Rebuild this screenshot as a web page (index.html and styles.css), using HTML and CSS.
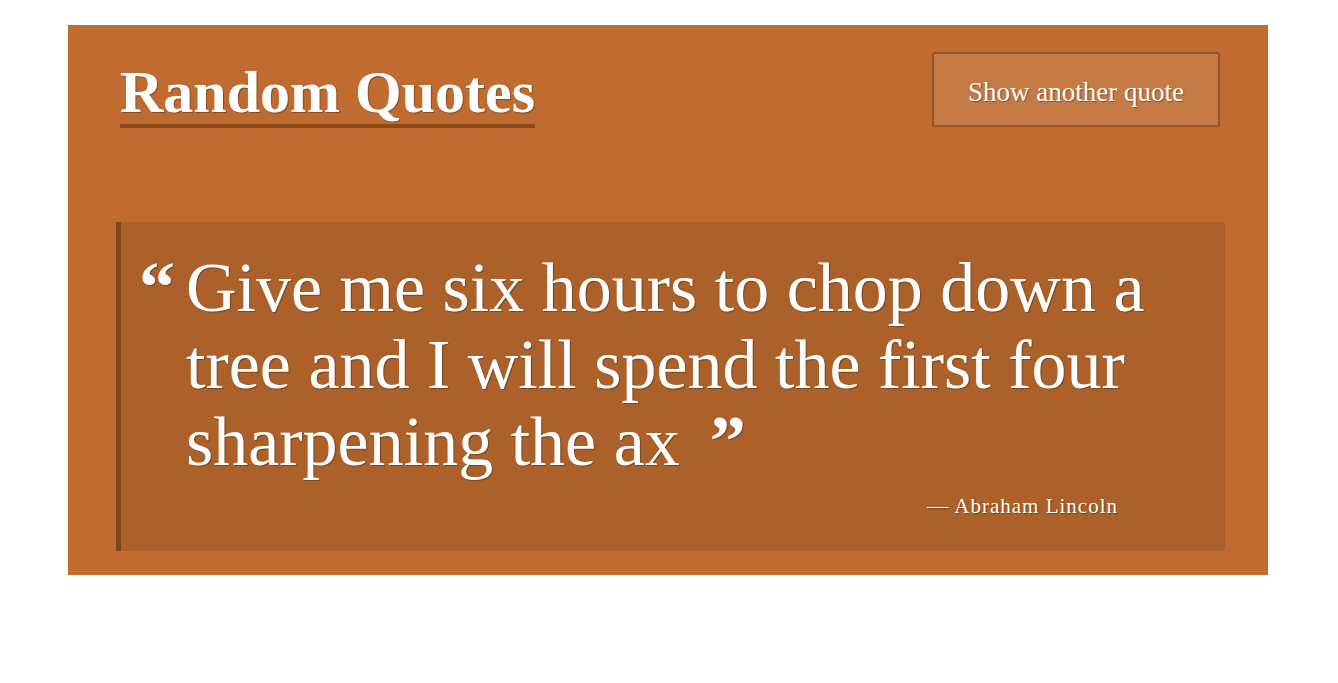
FILE: index.html
```html
<!DOCTYPE html>
<html lang="en">
<head>
<meta charset="utf-8">
<title>Random Quotes</title>
<link rel="stylesheet" href="styles.css">
</head>
<body>
<main class="card">
  <header class="top">
    <h1 class="title">Random Quotes</h1>
    <button class="next-btn" type="button">Show another quote</button>
  </header>
  <blockquote class="quote">
    <span class="mark-open">“</span>
    <div class="quote-body">
      <p class="quote-text">Give me six hours to chop down a tree and I will spend the first four sharpening the ax<span class="mark-close">”</span></p>
      <p class="author">— Abraham Lincoln</p>
    </div>
  </blockquote>
</main>
</body>
</html>
```
FILE: styles.css
```css
html, body {
  margin: 0;
  padding: 0;
  background: #ffffff;
}

body {
  padding-right: 2px;
  font-family: "Liberation Serif", "DejaVu Serif", serif;
  color: #ffffff;
}

.card {
  width: 1200px;
  margin: 25px auto 0;
  box-sizing: border-box;
  padding: 27px 48px 24px;
  background: #c06b2f;
}

.top {
  display: flex;
  justify-content: space-between;
  align-items: flex-end;
}

.title {
  margin: 0 0 0 4px;
  font-size: 60px;
  font-weight: bold;
  line-height: 62px;
  padding-bottom: 1px;
  border-bottom: 4px solid #8a4a1c;
  text-shadow: 1px 1px 1px rgba(0, 0, 0, 0.3);
}

.next-btn {
  width: 288px;
  height: 75px;
  margin-bottom: 1px;
  padding: 5px 0 0;
  background: #c67a45;
  border: 2px solid #94552a;
  border-radius: 3px;
  color: #ffffff;
  font-family: "Liberation Serif", "DejaVu Serif", serif;
  font-size: 27px;
  text-shadow: 1px 1px 1px rgba(0, 0, 0, 0.35);
  cursor: pointer;
}

.quote {
  display: flex;
  margin: 94px -5px 0 0;
  padding: 27px 40px 29px 18px;
  background: #ac612a;
  border-left: 5px solid #7e461c;
  border-radius: 0 4px 4px 0;
}

.mark-open,
.mark-close {
  font-weight: bold;
  font-size: 72px;
}

.mark-open {
  flex: none;
  width: 47px;
  line-height: 77px;
  text-shadow: 1px 1px 1px rgba(0, 0, 0, 0.3);
}

.quote-body {
  flex: 1;
}

.quote-text {
  margin: 0;
  font-size: 70px;
  line-height: 77px;
  text-shadow: 1px 1px 1px rgba(0, 0, 0, 0.3);
}

.mark-close {
  display: inline-block;
  line-height: 40px;
  margin-left: 30px;
}

.author {
  margin: 11px 67px 0 0;
  text-align: right;
  font-size: 21px;
  line-height: 31px;
  letter-spacing: 1px;
  text-shadow: 1px 1px 1px rgba(0, 0, 0, 0.35);
}
```
